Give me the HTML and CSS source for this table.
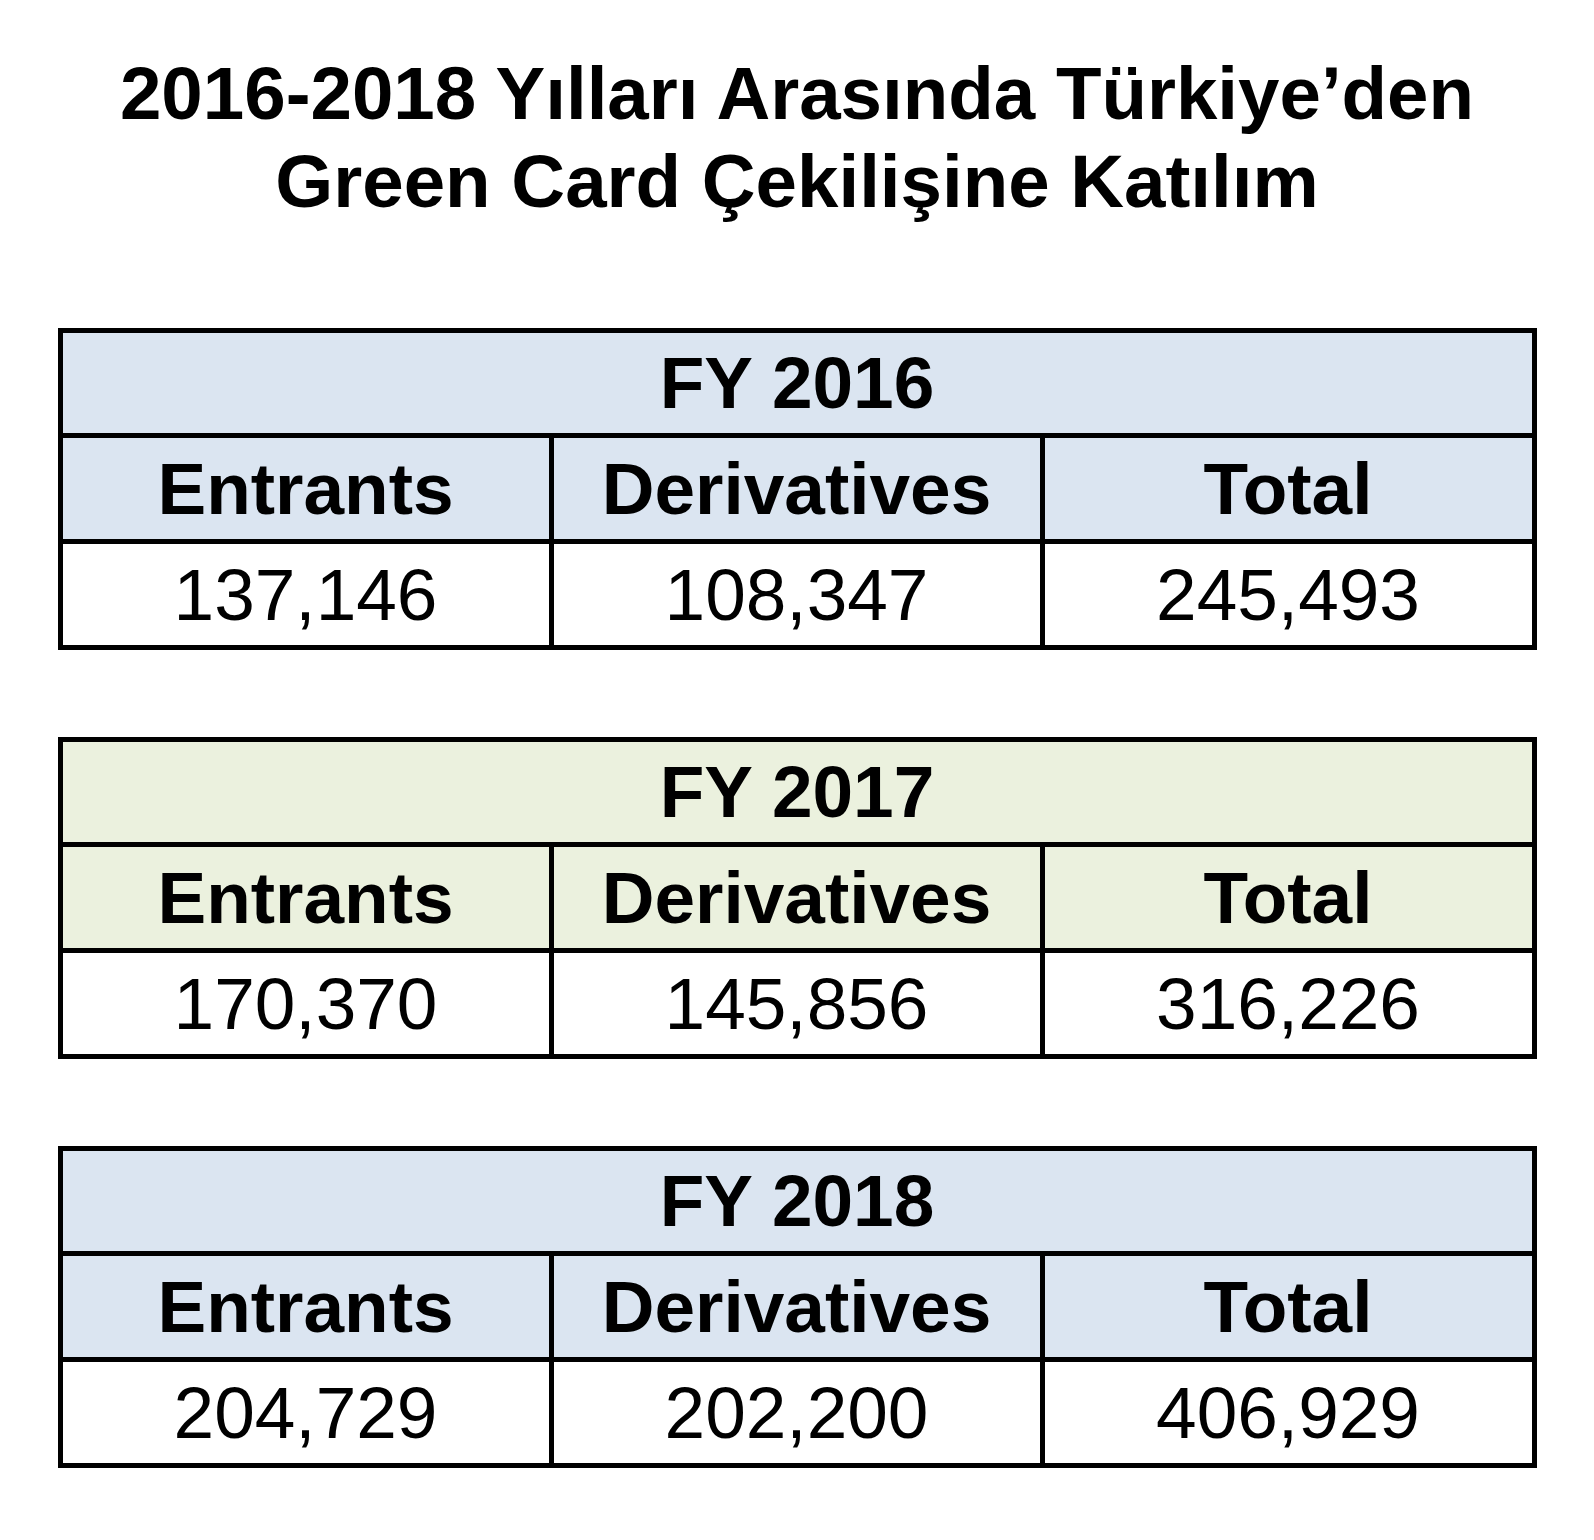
FILE: index.html
```html
<!DOCTYPE html>
<html lang="tr">
<head>
<meta charset="utf-8">
<title>Green Card Çekilişine Katılım</title>
<link rel="stylesheet" href="styles.css">
</head>
<body>
<main class="page">
  <h1 class="title">2016-2018 Yılları Arasında Türkiye’den<br>Green Card Çekilişine Katılım</h1>

  <section class="fy fy-blue">
    <div class="cell head">FY 2016</div>
    <div class="cell sub">Entrants</div>
    <div class="cell sub">Derivatives</div>
    <div class="cell sub">Total</div>
    <div class="cell val">137,146</div>
    <div class="cell val">108,347</div>
    <div class="cell val">245,493</div>
  </section>

  <section class="fy fy-green">
    <div class="cell head">FY 2017</div>
    <div class="cell sub">Entrants</div>
    <div class="cell sub">Derivatives</div>
    <div class="cell sub">Total</div>
    <div class="cell val">170,370</div>
    <div class="cell val">145,856</div>
    <div class="cell val">316,226</div>
  </section>

  <section class="fy fy-blue">
    <div class="cell head">FY 2018</div>
    <div class="cell sub">Entrants</div>
    <div class="cell sub">Derivatives</div>
    <div class="cell sub">Total</div>
    <div class="cell val">204,729</div>
    <div class="cell val">202,200</div>
    <div class="cell val">406,929</div>
  </section>
</main>
</body>
</html>
```

FILE: styles.css
```css
html, body {
  margin: 0;
  padding: 0;
  background: #ffffff;
}

body {
  font-family: "Liberation Sans", Arial, sans-serif;
  color: #000000;
}

.page {
  width: 1479px;
  margin: 0 auto;
  padding-top: 50px;
  padding-bottom: 60px;
  display: flex;
  flex-direction: column;
}

.title {
  margin: 0 0 102px 0;
  font-size: 74.5px;
  line-height: 88px;
  font-weight: 700;
  text-align: center;
}

.fy {
  display: grid;
  grid-template-columns: 486px 486px 487px;
  grid-template-rows: 100px 101px 101px;
  gap: 5px;
  padding: 5px;
  background: #000000;
  margin-bottom: 87px;
}

.cell {
  font-size: 73px;
  text-align: center;
  line-height: 100px;
  white-space: nowrap;
}

.head {
  grid-column: 1 / 4;
  font-weight: 700;
}

.sub {
  font-weight: 700;
  line-height: 101px;
}

.val {
  background: #ffffff;
  line-height: 101px;
}

.fy-blue .head,
.fy-blue .sub {
  background: #dbe5f1;
}

.fy-green .head,
.fy-green .sub {
  background: #ebf1de;
}
```
